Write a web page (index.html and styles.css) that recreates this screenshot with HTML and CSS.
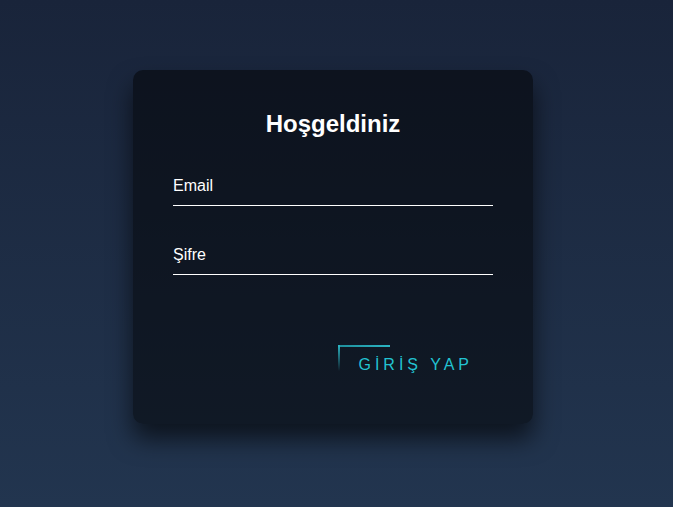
FILE: index.html
```html
<!DOCTYPE html>
<html lang="tr">
<head>
<meta charset="utf-8">
<title>Giriş</title>
<link rel="stylesheet" href="styles.css">
</head>
<body>
  <div class="login-box">
    <h2 class="title">Hoşgeldiniz</h2>
    <form class="form">
      <div class="field"><label class="label">Email</label></div>
      <div class="field"><label class="label">Şifre</label></div>
      <div class="actions">
        <a class="btn">
          <span class="line-top"></span>
          <span class="line-left"></span>
          GİRİŞ YAP
        </a>
      </div>
    </form>
  </div>
</body>
</html>
```
FILE: styles.css
```css
html, body {
  margin: 0;
  padding: 0;
}
body {
  min-height: 507px;
  box-sizing: border-box;
  padding: 70px 0 0 133px;
  background: linear-gradient(#19243a, #22354f);
  font-family: "Liberation Sans", Arial, sans-serif;
}
.login-box {
  width: 400px;
  box-sizing: border-box;
  padding: 40px;
  background: rgba(0, 0, 0, 0.5);
  border-radius: 10px;
  box-shadow: 0 15px 25px rgba(0, 0, 0, 0.6);
}
.title {
  margin: 0 0 29px;
  color: #fff;
  text-align: center;
  font-size: 24px;
  font-weight: bold;
  line-height: 28px;
}
.form {
  display: flex;
  flex-direction: column;
}
.field {
  padding: 10px 0;
  border-bottom: 1px solid #fff;
  margin-bottom: 30px;
  line-height: 18px;
}
.label {
  color: #fff;
  font-size: 16px;
}
.actions {
  display: flex;
  justify-content: flex-end;
  margin-top: 40px;
}
.btn {
  position: relative;
  display: inline-block;
  padding: 10px 20px;
  color: #22c3d2;
  font-size: 16px;
  line-height: 19px;
  letter-spacing: 4px;
  text-transform: uppercase;
  overflow: hidden;
}
.line-top {
  position: absolute;
  top: 0;
  left: 0;
  width: 52px;
  height: 2px;
  background: linear-gradient(90deg, #1f8f9c, #2bb5c3);
}
.line-left {
  position: absolute;
  top: 0;
  left: 0;
  width: 2px;
  height: 26px;
  background: linear-gradient(180deg, #2bb5c3, rgba(43, 181, 195, 0));
}
```
